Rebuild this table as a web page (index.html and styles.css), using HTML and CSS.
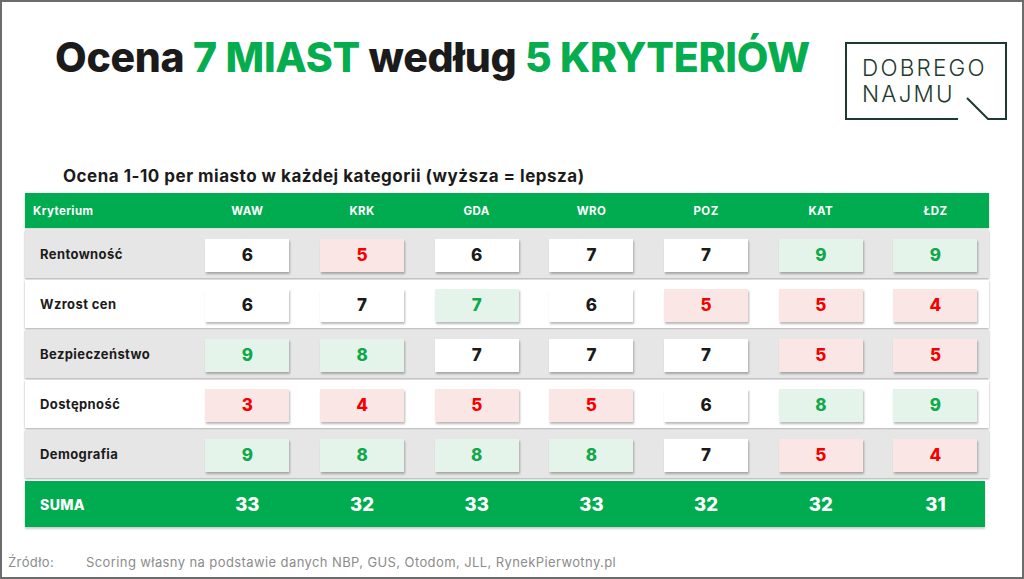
FILE: index.html
```html
<!DOCTYPE html>
<html lang="pl">
<head>
<meta charset="utf-8">
<title>Ocena 7 miast według 5 kryteriów</title>
<link rel="stylesheet" href="styles.css">
</head>
<body>
<div class="frame">
  <div class="top">
    <h1 class="title">Ocena <span class="accent">7 MIAST</span> według <span class="accent">5 KRYTERIÓW</span></h1>
    <div class="logo">
      <svg class="logo-frame" width="162" height="78" viewBox="0 0 162 78" aria-hidden="true">
        <path d="M113 77 H1 V1 H161 V77 H143 L122 56" fill="none" stroke="#1e3a2c" stroke-width="2"/>
      </svg>
      <div class="logo-line">DOBREGO</div>
      <div class="logo-line">NAJMU</div>
    </div>
  </div>
  <h2 class="subtitle">Ocena 1-10 per miasto w każdej kategorii (wyższa = lepsza)</h2>
  <div class="table">
    <div class="thead">
      <div class="lab">Kryterium</div>
      <div class="city">WAW</div><div class="city">KRK</div><div class="city">GDA</div><div class="city">WRO</div><div class="city">POZ</div><div class="city">KAT</div><div class="city">ŁDZ</div>
    </div>
    <div class="row alt">
      <div class="lab">Rentowność</div>
      <div class="c"><span class="cell">6</span></div><div class="c"><span class="cell bad">5</span></div><div class="c"><span class="cell">6</span></div><div class="c"><span class="cell">7</span></div><div class="c"><span class="cell">7</span></div><div class="c"><span class="cell good">9</span></div><div class="c"><span class="cell good">9</span></div>
    </div>
    <div class="row">
      <div class="lab">Wzrost cen</div>
      <div class="c"><span class="cell">6</span></div><div class="c"><span class="cell">7</span></div><div class="c"><span class="cell good">7</span></div><div class="c"><span class="cell">6</span></div><div class="c"><span class="cell bad">5</span></div><div class="c"><span class="cell bad">5</span></div><div class="c"><span class="cell bad">4</span></div>
    </div>
    <div class="row alt">
      <div class="lab">Bezpieczeństwo</div>
      <div class="c"><span class="cell good">9</span></div><div class="c"><span class="cell good">8</span></div><div class="c"><span class="cell">7</span></div><div class="c"><span class="cell">7</span></div><div class="c"><span class="cell">7</span></div><div class="c"><span class="cell bad">5</span></div><div class="c"><span class="cell bad">5</span></div>
    </div>
    <div class="row">
      <div class="lab">Dostępność</div>
      <div class="c"><span class="cell bad">3</span></div><div class="c"><span class="cell bad">4</span></div><div class="c"><span class="cell bad">5</span></div><div class="c"><span class="cell bad">5</span></div><div class="c"><span class="cell">6</span></div><div class="c"><span class="cell good">8</span></div><div class="c"><span class="cell good">9</span></div>
    </div>
    <div class="row alt">
      <div class="lab">Demografia</div>
      <div class="c"><span class="cell good">9</span></div><div class="c"><span class="cell good">8</span></div><div class="c"><span class="cell good">8</span></div><div class="c"><span class="cell good">8</span></div><div class="c"><span class="cell">7</span></div><div class="c"><span class="cell bad">5</span></div><div class="c"><span class="cell bad">4</span></div>
    </div>
    <div class="sum">
      <div class="lab">SUMA</div>
      <div class="tot">33</div><div class="tot">32</div><div class="tot">33</div><div class="tot">33</div><div class="tot">32</div><div class="tot">32</div><div class="tot">31</div>
    </div>
  </div>
  <div class="source">
    <span class="src-label">Źródło:</span>
    <span class="src-text">Scoring własny na podstawie danych NBP, GUS, Otodom, JLL, RynekPierwotny.pl</span>
  </div>
</div>
</body>
</html>
```
FILE: styles.css
```css
* { box-sizing: border-box; }
html, body { margin: 0; padding: 0; background: #fff; }
body { font-family: Inter, "Liberation Sans", sans-serif; color: #1b1b1b; }

.frame {
  width: 1024px;
  height: 579px;
  border: 2px solid #6c6c6c;
  padding-top: 35px;
  display: flex;
  flex-direction: column;
  overflow: hidden;
}

.top {
  display: flex;
  justify-content: space-between;
  align-items: flex-start;
  padding-left: 53px;
  padding-right: 15px;
}

.title {
  margin: 0;
  font-size: 41px;
  line-height: 41px;
  font-weight: 800;
  color: #1b1b1b;
  letter-spacing: -0.3px;
}
.accent { color: #05ad4f; }

.logo {
  position: relative;
  width: 162px;
  height: 78px;
  margin-top: 5px;
  padding: 13px 0 0 17px;
}
.logo-frame { position: absolute; left: 0; top: 0; }
.logo-line {
  font-size: 22.5px;
  line-height: 26px;
  font-weight: 300;
  letter-spacing: 2.2px;
  color: #1e3a2c;
}

.subtitle {
  margin: 46px 0 0 61px;
  font-size: 17px;
  line-height: 20px;
  font-weight: 700;
  letter-spacing: 0.5px;
  color: #1b1b1b;
}

.table {
  margin: 7px 0 0 23px;
  width: 964px;
  display: flex;
  flex-direction: column;
}

.thead, .row, .sum {
  display: grid;
  grid-template-columns: 165px repeat(7, 114.7px);
  align-items: center;
}

.thead {
  height: 35px;
  background: #00ac4f;
  color: #fff;
  font-size: 11.5px;
  font-weight: 700;
  letter-spacing: 0.4px;
  box-shadow: 0 1px 2px rgba(0,0,0,0.2);
}
.thead .lab { padding-left: 8px; }
.city { text-align: center; }

.row {
  height: 48px;
  margin-top: 2px;
  background: #fff;
  box-shadow: 0 1px 2px rgba(0,0,0,0.35);
}
.row.alt { background: #e6e6e6; }
.row .lab {
  padding-left: 15px;
  font-size: 13px;
  font-weight: 700;
  letter-spacing: 0.4px;
  color: #1b1b1b;
}
.c { display: flex; justify-content: center; }
.cell {
  width: 84px;
  height: 33px;
  display: flex;
  align-items: center;
  justify-content: center;
  background: #fff;
  font-size: 17px;
  font-weight: 800;
  color: #1b1b1b;
  box-shadow: 1px 2px 2px rgba(0,0,0,0.28);
  margin-top: 2px;
}
.cell.good { background: #e5f4ea; color: #10a84a; }
.cell.bad { background: #fbe6e6; color: #f50000; }

.sum {
  width: 960px;
  height: 46px;
  margin-top: 3px;
  background: #00ac4f;
  color: #fff;
  box-shadow: 0 2px 2px rgba(0,0,0,0.2);
}
.sum .lab {
  padding-left: 15px;
  font-size: 14px;
  font-weight: 800;
  letter-spacing: 0.4px;
}
.tot {
  text-align: center;
  font-size: 18.5px;
  font-weight: 800;
}

.source {
  margin-top: 27px;
  padding-left: 6px;
  display: flex;
  font-size: 13px;
  line-height: 16px;
  letter-spacing: 0.4px;
  color: #8c8c8c;
}
.src-label { width: 78px; }
```
